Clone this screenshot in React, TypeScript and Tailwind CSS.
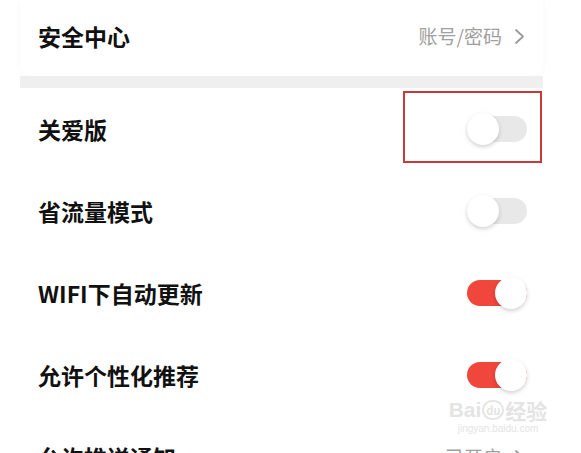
import React from "react";

const font = { fontFamily: '"Noto Sans CJK SC", "Noto Sans", sans-serif' };

function Chevron() {
  return (
    <svg width="11" height="17" viewBox="0 0 11 17" className="ml-[12px]">
      <polyline points="2,2 9,8.5 2,15" fill="none" stroke="#9a9a9a" strokeWidth="1.8" strokeLinecap="round" strokeLinejoin="round" />
    </svg>
  );
}

function Switch({ on }: { on: boolean }) {
  return (
    <div className="relative w-[60px] h-[32px] flex items-center">
      <div className={`w-full h-[26px] rounded-full ${on ? "bg-[#f0463c]" : "bg-[#e8e8e8]"}`} />
      <div
        className={`absolute top-0 w-[32px] h-[32px] rounded-full bg-white shadow-[0_2px_4px_rgba(0,0,0,0.18)] ${
          on ? "right-0" : "left-0"
        }`}
      />
    </div>
  );
}

function Row({ title, children }: { title: string; children?: React.ReactNode }) {
  return (
    <div className="relative h-[82px] pl-[18px] pr-[16px] flex items-center justify-between">
      <span className="text-[23px] font-bold text-[#111]">{title}</span>
      {children}
    </div>
  );
}

export default function App() {
  return (
    <div className="relative w-[581px] h-[453px] overflow-hidden bg-white" style={font}>
      <div className="ml-[20px] w-[523px] h-[76px] pb-[4px] pl-[18px] pr-[18px] flex items-center justify-between bg-white rounded-b-[10px] shadow-[0_0_6px_rgba(0,0,0,0.04)]">
        <span className="text-[23px] font-bold text-[#111]">安全中心</span>
        <div className="flex items-center">
          <span className="text-[19px] text-[#a0a0a0]">账号/密码</span>
          <Chevron />
        </div>
      </div>
      <div className="ml-[20px] w-[523px] h-[12px] bg-[#efefef]" />
      <div className="ml-[20px] w-[523px] bg-white">
        <Row title="关爱版">
          <Switch on={false} />
          <div className="absolute left-[383px] top-[3px] w-[139px] h-[72px] border-2 border-[#c9393a]" />
        </Row>
        <Row title="省流量模式">
          <Switch on={false} />
        </Row>
        <Row title="WIFI下自动更新">
          <Switch on={true} />
        </Row>
        <Row title="允许个性化推荐">
          <Switch on={true} />
        </Row>
        <div className="h-[82px] pl-[18px] pr-[18px] flex items-center justify-between">
          <span className="text-[23px] font-bold text-[#111]">允许推送通知</span>
          <div className="flex items-center">
            <span className="text-[19px] text-[#a0a0a0]">已开启</span>
            <Chevron />
          </div>
        </div>
      </div>
      <div className="absolute left-[447px] top-[398px] w-[102px] flex flex-col items-center text-[#e4e4e4] pointer-events-none">
        <div className="flex items-center gap-[1px] text-[21px] leading-[24px] font-bold">
          <span style={{ fontFamily: '"Liberation Sans", sans-serif' }}>Bai</span>
          <span className="w-[22px] h-[20px] rounded-full border-2 border-[#e4e4e4] text-[11px] leading-[16px] text-center">du</span>
          <span>经验</span>
        </div>
        <span className="text-[10px] leading-[13px]" style={{ fontFamily: '"Liberation Sans", sans-serif' }}>
          jingyan.baidu.com
        </span>
      </div>
    </div>
  );
}
